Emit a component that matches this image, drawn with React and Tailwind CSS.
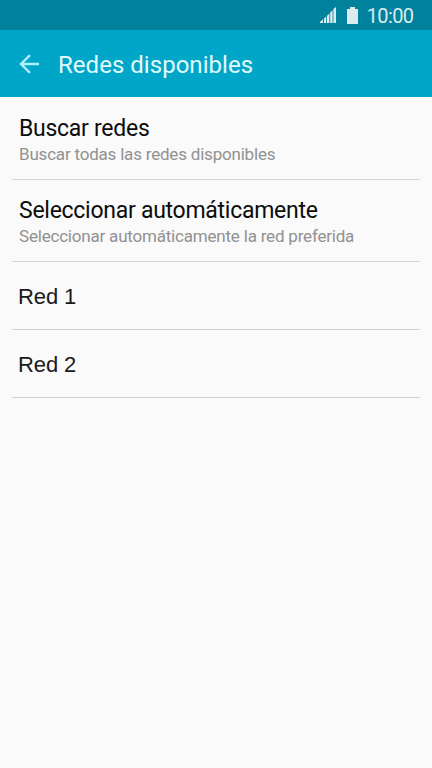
const Row = ({ title, sub }) => (
  <li className="h-[82px] border-b border-[#d4d4d4] pl-[7px] pt-[15px]">
    <div className="whitespace-nowrap text-[23px] leading-[32px] tracking-[-0.27px] text-[#0c0c0c]">{title}</div>
    <div className="-mt-px whitespace-nowrap text-[17px] leading-[20px] tracking-[-0.2px] text-[#919191]">{sub}</div>
  </li>
);

const Network = ({ name }) => (
  <li className="flex h-[68px] items-center border-b border-[#d0d0d0] pl-[6px] pt-[2px] font-['Liberation_Sans',sans-serif] text-[22px] tracking-[-0.1px] text-[#1a1a1a]">
    {name}
  </li>
);

export default function App() {
  return (
    <div className="h-[768px] w-[432px] overflow-hidden bg-[#fafafa] font-[Roboto,sans-serif]">
      <div className="flex h-[30px] items-center justify-end bg-[#00819c] pr-[19px] text-[#dcebef]">
        <svg className="mr-[11px] h-4 w-4" viewBox="0 0 16 16" fill="currentColor">
          <path d="M0 16V15L3 12.3V16H0zM4 11.5L6.2 9.5V16H4zM7 8.8L9.4 6.4V16H7zM10.2 5.6L12.6 3.2V16H10.2zM13.4 2L16 0V16H13.4z" />
        </svg>
        <svg className="mr-[9px] h-[17px] w-[11px]" viewBox="0 0 11 17" fill="currentColor">
          <path d="M3 0h5v2h3v15H0V2h3z" />
        </svg>
        <span className="-mr-[0.5px] pt-[2px] text-[20px] leading-[28px] tracking-[-0.6px]">10:00</span>
      </div>
      <header className="flex h-[67px] items-center bg-[#00a6c8] pl-[19px]">
        <svg className="h-5 w-5 text-[#a8f4fa]" viewBox="0 0 20 20" fill="none" stroke="currentColor" strokeWidth="2.4">
          <path d="M20 10H2M11 1.2L2 10L11 18.8" />
        </svg>
        <h1 className="ml-[19px] pt-[2px] text-[24px] tracking-[0.03px] text-[#e0fbff]">Redes disponibles</h1>
      </header>
      <ul className="mx-3 pt-px">
        <Row title="Buscar redes" sub="Buscar todas las redes disponibles" />
        <Row title="Seleccionar automáticamente" sub="Seleccionar automáticamente la red preferida" />
        <Network name="Red 1" />
        <Network name="Red 2" />
      </ul>
    </div>
  );
}
